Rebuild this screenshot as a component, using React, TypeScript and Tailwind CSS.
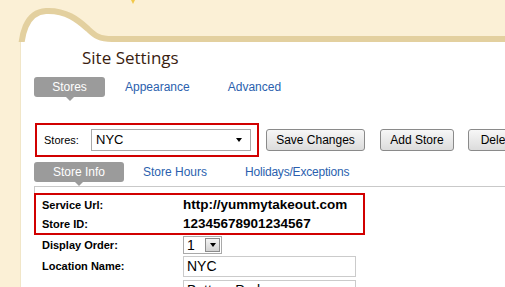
export default function App() {
  return (
    <div className="w-[505px] h-[287px] overflow-hidden bg-[#fbf0d6] flex flex-col font-['Liberation_Sans',Arial,sans-serif] text-black">
      {/* header curve */}
      <svg width="505" height="42" viewBox="0 0 505 42" className="block shrink-0">
        <path d="M21,60 C20,35 26,12 46,11 C66,10 78,20 88,29 C95,36 100,39 112,39 L505,39 L505,60 Z" fill="#ffffff" />
        <path d="M21,60 C20,35 26,12 46,11 C66,10 78,20 88,29 C95,36 100,39 112,39 L505,39" fill="none" stroke="#e3d09f" strokeWidth="6" />
        <path d="M131,0 L133,4 L135,0 Z" fill="#f2c84a" />
      </svg>

      <div className="flex flex-1 min-h-0">
        <div className="w-[20px] shrink-0" />
        <div className="flex-1 bg-white border-l border-[#f1e6c8] pl-[13px]">
          {/* title */}
          <div className="mt-[4px] h-[24px] leading-[24px] pl-[48px] text-[17px] text-[#3a1d10] font-['Open_Sans',sans-serif]">
            Site Settings
          </div>

          {/* top tabs */}
          <div className="mt-[7px] flex items-center h-[20px] text-[12px]">
            <div className="relative w-[71px] h-[20px] rounded-[3px] bg-[#9b9b9b] text-white flex items-center justify-center">
              Stores
              <span className="absolute left-[32px] top-[20px] w-0 h-0 border-l-[4px] border-r-[4px] border-t-[4px] border-l-transparent border-r-transparent border-t-[#9b9b9b]" />
            </div>
            <span className="ml-[20px] text-[#2b5fae]">Appearance</span>
            <span className="ml-[38px] text-[#2b5fae]">Advanced</span>
          </div>

          {/* stores selector */}
          <div className="mt-[26px] flex items-center">
            <div className="ml-px w-[224px] h-[34px] border-2 border-[#d10000] flex items-center pl-[7px]">
              <span className="w-[47px] text-[11px]">Stores:</span>
              <div className="w-[160px] h-[22px] border border-[#a9a9a9] bg-white flex items-center justify-between pl-[4px] pr-[8px]">
                <span className="text-[13px]">NYC</span>
                <span className="w-0 h-0 border-l-[3.5px] border-r-[3.5px] border-t-[4px] border-l-transparent border-r-transparent border-t-black" />
              </div>
            </div>
            <button className="ml-[7px] w-[99px] h-[22px] rounded-[3px] border border-[#8a8a8a] bg-linear-to-b from-[#f7f7f7] to-[#dcdcdc] text-[12px]">
              Save Changes
            </button>
            <button className="ml-[15px] w-[74px] h-[22px] rounded-[3px] border border-[#8a8a8a] bg-linear-to-b from-[#f7f7f7] to-[#dcdcdc] text-[12px]">
              Add Store
            </button>
            <button className="ml-[14px] w-[60px] shrink-0 h-[22px] rounded-[3px] border border-[#8a8a8a] bg-linear-to-b from-[#f7f7f7] to-[#dcdcdc] text-[12px]">
              Delete
            </button>
          </div>

          {/* sub tabs */}
          <div className="mt-[5px] flex items-center h-[20px] text-[12px]">
            <div className="relative w-[90px] h-[20px] rounded-[3px] bg-[#9b9b9b] text-white flex items-center justify-center">
              Store Info
              <span className="absolute left-[41px] top-[20px] w-0 h-0 border-l-[4px] border-r-[4px] border-t-[4px] border-l-transparent border-r-transparent border-t-[#9b9b9b]" />
            </div>
            <span className="ml-[19px] text-[#2b5fae]">Store Hours</span>
            <span className="ml-[38px] text-[#2b5fae] tracking-[-0.2px]">Holidays/Exceptions</span>
          </div>

          {/* store info content */}
          <div className="mt-[4px] border-t border-[#c9c9c9]">
            <div className="h-[6px] border-l border-[#c9c9c9]" />
            <div className="w-[331px] border-2 border-[#d10000] pl-[6px] pt-px">
              <div className="flex items-center h-[19px]">
                <span className="w-[141px] text-[11px] font-bold">Service Url:</span>
                <span className="text-[13.5px] font-bold">http://yummytakeout.com</span>
              </div>
              <div className="flex items-center h-[18px]">
                <span className="w-[141px] text-[11px] font-bold">Store ID:</span>
                <span className="text-[13.5px] font-bold">12345678901234567</span>
              </div>
            </div>

            <div className="mt-px pl-[8px] flex items-center h-[18px]">
              <span className="w-[141px] text-[11px] font-bold">Display Order:</span>
              <div className="w-[39px] h-[18px] border border-[#a9a9a9] bg-white flex items-center justify-between pl-[3px] pr-px">
                <span className="text-[14px] leading-none">1</span>
                <div className="w-[15px] h-[14px] border border-[#8c8c8c] bg-linear-to-b from-[#f4f4f4] to-[#d2d2d2] flex items-center justify-center">
                  <span className="w-0 h-0 border-l-[3.5px] border-r-[3.5px] border-t-[4px] border-l-transparent border-r-transparent border-t-black" />
                </div>
              </div>
            </div>

            <div className="mt-[2px] pl-[8px] flex items-center h-[21px]">
              <span className="w-[141px] text-[11px] font-bold">Location Name:</span>
              <div className="w-[173px] h-[21px] border border-[#cbcbcb] bg-white flex items-center pl-[3px]">
                <span className="text-[14px]">NYC</span>
              </div>
            </div>

            <div className="mt-[3px] pl-[8px] flex items-start h-[21px]">
              <span className="w-[141px]" />
              <div className="w-[173px] h-[21px] border border-[#cbcbcb] bg-white flex items-center pl-[3px]">
                <span className="text-[14px]">Battery Park</span>
              </div>
            </div>
          </div>
        </div>
      </div>
    </div>
  );
}
